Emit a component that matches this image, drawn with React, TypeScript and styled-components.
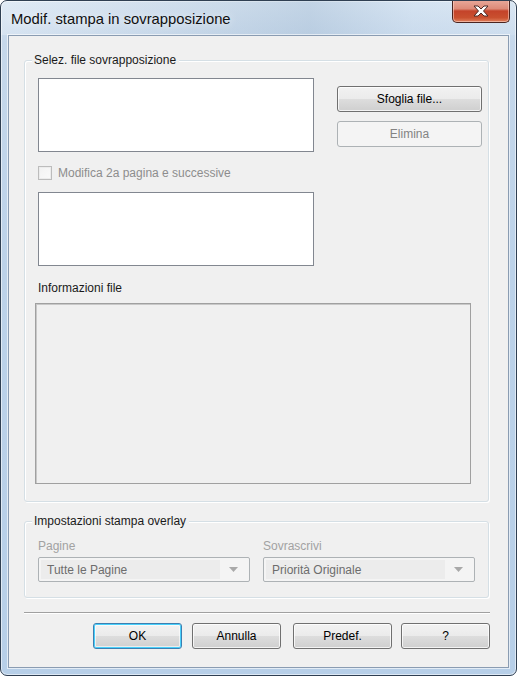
import React from "react";
import styled, { createGlobalStyle, css } from "styled-components";

const Global = createGlobalStyle`
  html, body { margin: 0; padding: 0; background: #ffffff; }
  body { font-family: "Liberation Sans", Arial, sans-serif; }
  * { box-sizing: border-box; }
`;

const Window = styled.div`
  width: 517px;
  height: 676px;
  border: 1px solid #2f3f52;
  border-radius: 7px;
  background: linear-gradient(180deg, #d6e4f2 0%, #c6d8eb 6%, #bcd2e9 40%, #b7cfe8 100%);
  display: flex;
  flex-direction: column;
  padding: 0 7px 7px 7px;
  overflow: hidden;
  box-shadow: inset 0 0 0 1px rgba(255, 255, 255, 0.55);
`;

const TitleBar = styled.div`
  height: 34px;
  display: flex;
  align-items: flex-start;
  justify-content: space-between;
  background: linear-gradient(90deg, rgba(255,255,255,0.25) 0%, rgba(170,190,210,0.25) 45%, rgba(150,175,200,0.3) 60%, rgba(210,225,240,0.2) 80%, rgba(255,255,255,0.1) 100%);
  margin: 0 -7px;
  padding-right: 6px;
  padding-left: 10px;
`;

const TitleText = styled.span`
  font-family: "Liberation Sans", Arial, sans-serif;
  font-size: 14.8px;
  color: #101010;
  line-height: 18px;
  margin-top: 9px;
  text-shadow: 0 0 8px rgba(255, 255, 255, 0.9);
`;

const CloseButton = styled.div`
  width: 58px;
  height: 23px;
  margin-top: -1px;
  border: 1px solid #4a2420;
  border-top: none;
  border-radius: 0 0 5px 5px;
  background: linear-gradient(180deg, #e9a99b 0%, #dd8a78 40%, #c4432a 50%, #c9502f 80%, #e0805d 100%);
  box-shadow: inset 0 0 0 1px rgba(255, 220, 210, 0.55);
  display: flex;
  align-items: center;
  justify-content: center;
`;

const Client = styled.div`
  flex: 1;
  background: #f0f0f0;
  border: 1px solid #8a9cb2;
  box-shadow: 0 0 0 1px rgba(255, 255, 255, 0.6);
  display: flex;
  flex-direction: column;
  padding: 24px 19px 0 15px;
`;

const GroupBox = styled.div<{ $h: number; $pad: string; $mt?: number }>`
  position: relative;
  height: ${(p) => p.$h}px;
  margin-top: ${(p) => p.$mt ?? 0}px;
  border: 1px solid #d5dfe5;
  border-radius: 3px;
  box-shadow: inset 1px 1px 0 #ffffff, 1px 1px 0 #ffffff;
  padding: ${(p) => p.$pad};
`;

const Legend = styled.span`
  position: absolute;
  top: -9px;
  left: 7px;
  padding: 0 3px 0 2px;
  background: #f0f0f0;
  font-size: 12px;
  line-height: 16px;
  color: #1a1a1a;
`;

const TopArea = styled.div`
  display: flex;
  align-items: flex-start;
`;

const LeftCol = styled.div`
  width: 276px;
  display: flex;
  flex-direction: column;
`;

const RightCol = styled.div`
  width: 145px;
  margin-left: 23px;
  margin-top: 8px;
  display: flex;
  flex-direction: column;
  gap: 9px;
`;

const ListBox = styled.div`
  height: 74px;
  background: #ffffff;
  border: 1px solid #828790;
`;

const CheckRow = styled.label`
  display: flex;
  align-items: center;
  gap: 6px;
  margin: 14px 0 13px 0;
  height: 13px;
  font-size: 12px;
  color: #8d8d8d;
`;

const CheckBox = styled.span`
  width: 14px;
  height: 14px;
  border: 1px solid #bcbcbc;
  background: linear-gradient(135deg, #f2f2f2, #fafafa);
  box-shadow: inset 0 0 0 1px #ececec;
`;

const FieldLabel = styled.div<{ $disabled?: boolean; $mt?: number }>`
  font-size: 12px;
  line-height: 16px;
  margin-top: ${(p) => p.$mt ?? 0}px;
  color: ${(p) => (p.$disabled ? "#a2a2a2" : "#1a1a1a")};
`;

const InfoBox = styled.div`
  height: 181px;
  width: 436px;
  margin-left: -3px;
  margin-top: 7px;
  border: 1px solid #a0a0a0;
  background: #f0f0f0;
  box-shadow: inset 1px 1px 0 #c8c8c8;
`;

const Button = styled.button<{ $w?: number; $ml?: number; $focus?: boolean; $disabled?: boolean }>`
  height: 26px;
  width: ${(p) => (p.$w ? `${p.$w}px` : "100%")};
  margin-left: ${(p) => p.$ml ?? 0}px;
  border: 1px solid #707070;
  border-radius: 3px;
  background: linear-gradient(180deg, #f2f2f2 0%, #ebebeb 49%, #dddddd 51%, #cfcfcf 100%);
  box-shadow: inset 0 0 0 1px rgba(255, 255, 255, 0.75);
  font-family: "Liberation Sans", Arial, sans-serif;
  font-size: 12px;
  color: #000000;
  display: flex;
  align-items: center;
  justify-content: center;
  padding: 0;
  ${(p) =>
    p.$focus &&
    css`
      border-color: #3c7fb1;
      box-shadow: inset 0 0 0 1px #48d0fb, inset 0 0 0 2px rgba(255, 255, 255, 0.6);
    `}
  ${(p) =>
    p.$disabled &&
    css`
      border-color: #adb2b5;
      background: #f4f4f4;
      color: #838383;
      box-shadow: none;
    `}
`;

const ComboRow = styled.div`
  display: flex;
  gap: 13px;
`;

const ComboCol = styled.div`
  width: 212px;
  display: flex;
  flex-direction: column;
  gap: 3px;
`;

const Combo = styled.div`
  height: 25px;
  border: 1px solid #adb2b5;
  border-radius: 2px;
  background: #f4f4f4;
  display: flex;
  align-items: stretch;
  padding: 2px;
`;

const ComboText = styled.div`
  flex: 1;
  background: #ececec;
  font-size: 12px;
  color: #6d6d6d;
  display: flex;
  align-items: center;
  padding-left: 6px;
`;

const ComboArrow = styled.div`
  width: 27px;
  display: flex;
  align-items: center;
  justify-content: center;
`;

const Separator = styled.div`
  height: 2px;
  margin: 14px -1px 9px 0;
  border-top: 1px solid #a0a0a0;
  border-bottom: 1px solid #ffffff;
`;

const ButtonRow = styled.div`
  display: flex;
  justify-content: flex-end;
  margin-right: -1px;
`;

const Arrow = () => (
  <svg width="9" height="5" viewBox="0 0 9 5">
    <path d="M0 0 H9 L4.5 5 Z" fill="#a9a9a9" />
  </svg>
);

const CloseGlyph = () => (
  <svg width="16" height="12" viewBox="0 0 16 12">
    <path
      d="M1 1 H5 L8 4 L11 1 H15 L10.5 6 L15 11 H11 L8 8 L5 11 H1 L5.5 6 Z"
      fill="#ffffff"
      stroke="#4b2a26"
      strokeWidth="1"
      strokeLinejoin="round"
    />
  </svg>
);

export default function App() {
  return (
    <>
      <Global />
      <Window>
        <TitleBar>
          <TitleText>Modif. stampa in sovrapposizione</TitleText>
          <CloseButton>
            <CloseGlyph />
          </CloseButton>
        </TitleBar>
        <Client>
          <GroupBox $h={442} $pad="17px 6px 18px 13px">
            <Legend>Selez. file sovrapposizione</Legend>
            <TopArea>
              <LeftCol>
                <ListBox />
                <CheckRow>
                  <CheckBox />
                  Modifica 2a pagina e successive
                </CheckRow>
                <ListBox />
              </LeftCol>
              <RightCol>
                <Button>Sfoglia file...</Button>
                <Button $disabled>Elimina</Button>
              </RightCol>
            </TopArea>
            <FieldLabel $mt={14}>Informazioni file</FieldLabel>
            <InfoBox />
          </GroupBox>
          <GroupBox $h={77} $pad="16px 12px 0 13px" $mt={19}>
            <Legend>Impostazioni stampa overlay</Legend>
            <ComboRow>
              <ComboCol>
                <FieldLabel $disabled>Pagine</FieldLabel>
                <Combo>
                  <ComboText>Tutte le Pagine</ComboText>
                  <ComboArrow>
                    <Arrow />
                  </ComboArrow>
                </Combo>
              </ComboCol>
              <ComboCol>
                <FieldLabel $disabled>Sovrascrivi</FieldLabel>
                <Combo>
                  <ComboText>Priorità Originale</ComboText>
                  <ComboArrow>
                    <Arrow />
                  </ComboArrow>
                </Combo>
              </ComboCol>
            </ComboRow>
          </GroupBox>
          <Separator />
          <ButtonRow>
            <Button $w={89} $focus>OK</Button>
            <Button $w={89} $ml={10}>Annulla</Button>
            <Button $w={99} $ml={12}>Predef.</Button>
            <Button $w={89} $ml={9}>?</Button>
          </ButtonRow>
        </Client>
      </Window>
    </>
  );
}
